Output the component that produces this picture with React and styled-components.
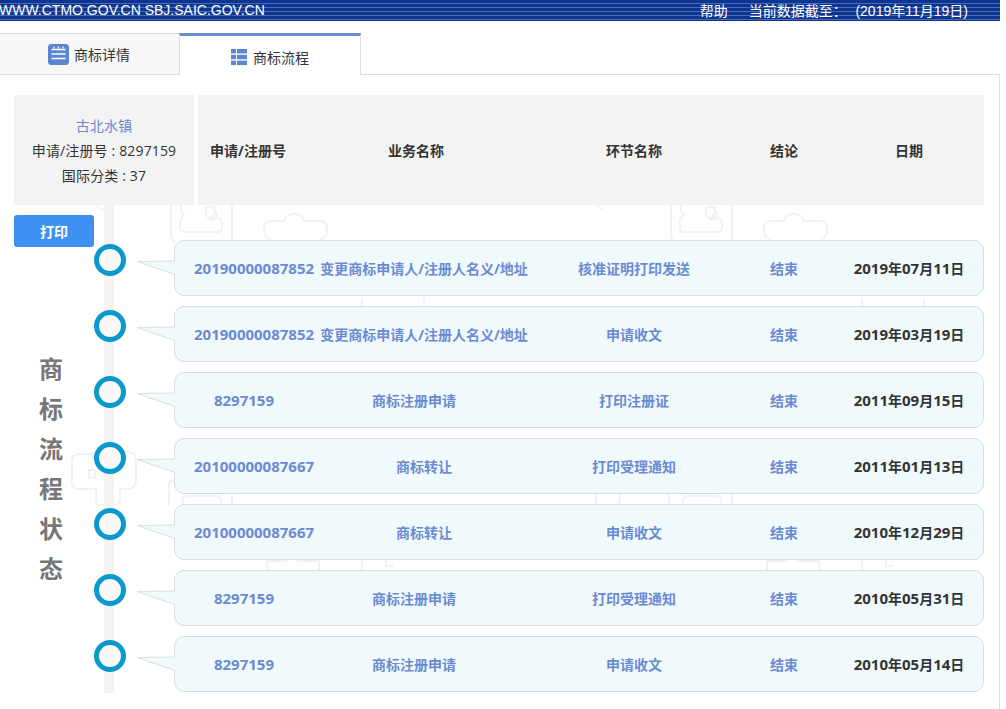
import React from "react";
import styled, { createGlobalStyle } from "styled-components";

const GlobalStyle = createGlobalStyle`
  html, body {
    margin: 0;
    padding: 0;
    background: #fff;
    overflow: hidden;
  }
  body {
    font-family: "Open Sans", "Noto Sans CJK SC", sans-serif;
    font-size: 14px;
    color: #333;
  }
`;

const BLUE = "#6a8bd3";

const Page = styled.div`
  position: relative;
  width: 1000px;
  height: 709px;
  overflow: hidden;
`;

const TopBar = styled.div`
  box-sizing: border-box;
  height: 21px;
  display: flex;
  align-items: center;
  justify-content: space-between;
  padding: 0 32px 1px 0;
  color: #fff;
  font-family: "Liberation Sans", "Noto Sans CJK SC", sans-serif;
  font-size: 14px;
  background: repeating-linear-gradient(
    to bottom,
    #0d3492 0,
    #0d3492 3px,
    #4a6cb0 3px,
    #4a6cb0 4px
  );
`;

const Sites = styled.span`
  margin-left: -1px;
`;

const TopRight = styled.div`
  display: flex;
  gap: 21px;
  word-spacing: 0.5px;
`;

const Tabs = styled.div`
  display: flex;
  margin-top: 12px;
  height: 41px;
  position: relative;
`;

const Tab = styled.div`
  display: flex;
  align-items: center;
  justify-content: center;
  gap: ${(p) => (p.$active ? "6px" : "5px")};
  box-sizing: border-box;
  width: ${(p) => (p.$active ? "182px" : "179px")};
  background: ${(p) => (p.$active ? "#fff" : "#f8f8f8")};
  border-top: ${(p) => (p.$active ? "3px solid #6a8fd0" : "1px solid #dedede")};
  border-left: ${(p) => (p.$active ? "1px solid #dedede" : "none")};
  border-right: ${(p) => (p.$active ? "1px solid #dedede" : "none")};
  padding-top: ${(p) => (p.$active ? "3px" : "0")};
  padding-right: ${(p) => (p.$active ? "0" : "1px")};
  height: ${(p) => (p.$active ? "42px" : "41px")};
  margin-bottom: -1px;
  z-index: 2;
`;

const Panel = styled.div`
  box-sizing: border-box;
  height: 635px;
  border-top: 1px solid #dedede;
  border-right: 1px solid #dedede;
  padding: 20px 15px 0 14px;
  position: relative;
  z-index: 1;
`;

const Watermark = styled.svg`
  position: absolute;
  left: 0;
  top: 0;
  z-index: 0;
  pointer-events: none;
`;

const TopRow = styled.div`
  display: flex;
  gap: 4px;
  position: relative;
  z-index: 2;
`;

const InfoBox = styled.div`
  width: 180px;
  height: 110px;
  background: #f3f3f3;
  display: flex;
  flex-direction: column;
  align-items: center;
  justify-content: center;
  line-height: 25px;
  letter-spacing: 0.15px;
`;

const Name = styled.div`
  color: ${BLUE};
`;

const TableHead = styled.div`
  flex: 1;
  height: 110px;
  background: #f3f3f3;
  display: grid;
  grid-template-columns: 100px 236px 200px 100px 150px;
  align-items: center;
  justify-items: center;
  font-weight: 700;
`;

const Body = styled.div`
  display: flex;
  position: relative;
  z-index: 1;
`;

const SideColumn = styled.div`
  width: 80px;
  flex: none;
`;

const PrintButton = styled.button`
  display: block;
  width: 80px;
  height: 32px;
  margin-top: 10px;
  border: none;
  border-radius: 3px;
  background: #3e90f2;
  color: #fff;
  font-family: inherit;
  font-size: 14px;
  font-weight: 700;
`;

const SideLabel = styled.div`
  margin-top: 102px;
  padding-right: 6px;
  display: flex;
  flex-direction: column;
  align-items: center;
  font-size: 24px;
  font-weight: 700;
  line-height: 40px;
  color: #777;
`;

const Timeline = styled.div`
  flex: 1;
  position: relative;
  padding-top: 35px;
  display: flex;
  flex-direction: column;
  gap: 10px;

  &::before {
    content: "";
    position: absolute;
    left: 10px;
    top: 0;
    width: 10px;
    height: 488px;
    background: #f3f3f3;
  }
`;

const Item = styled.div`
  display: flex;
  position: relative;
`;

const Dot = styled.div`
  box-sizing: border-box;
  width: 32px;
  height: 32px;
  margin-top: 4px;
  flex: none;
  border: 5px solid #0a99cc;
  border-radius: 50%;
  background: #f8f8f8;
  position: relative;
`;

const Card = styled.div`
  margin-left: 48px;
  box-sizing: border-box;
  width: 810px;
  height: 56px;
  padding: 0 19px;
  position: relative;
  display: grid;
  grid-template-columns: 100px 260px 160px 140px 110px;
  align-items: center;
  justify-items: center;
  border: 1px solid #d9dcde;
  border-radius: 10px;
  background: #f0f9fc;
  color: ${BLUE};
  font-weight: 700;
  white-space: nowrap;
`;

const Pointer = styled.svg`
  position: absolute;
  left: -38px;
  top: 19px;
`;

const Num = styled.span`
  font-size: 15px;
`;

const RegNo = styled.div`
  width: 100px;
  text-align: ${(p) => (p.$long ? "left" : "center")};
`;

const Business = styled.div`
  padding-right: ${(p) => (p.$shift ? "20px" : "0")};
`;

const DateCell = styled.div`
  color: #333;
`;

const head = ["申请/注册号", "业务名称", "环节名称", "结论", "日期"];

const rows = [
  { no: "20190000087852", biz: "变更商标申请人/注册人名义/地址", step: "核准证明打印发送", date: "2019年07月11日" },
  { no: "20190000087852", biz: "变更商标申请人/注册人名义/地址", step: "申请收文", date: "2019年03月19日" },
  { no: "8297159", biz: "商标注册申请", step: "打印注册证", date: "2011年09月15日" },
  { no: "20100000087667", biz: "商标转让", step: "打印受理通知", date: "2011年01月13日" },
  { no: "20100000087667", biz: "商标转让", step: "申请收文", date: "2010年12月29日" },
  { no: "8297159", biz: "商标注册申请", step: "打印受理通知", date: "2010年05月31日" },
  { no: "8297159", biz: "商标注册申请", step: "申请收文", date: "2010年05月14日" },
];

// digits are a touch wider than the 14px han text next to them
const withNums = (text) =>
  text.split(/(\d+)/).map((part, i) => (i % 2 ? <Num key={i}>{part}</Num> : part));

const DetailIcon = () => (
  <svg width="21" height="21" viewBox="0 0 21 21">
    <rect width="21" height="21" rx="3.5" fill="#5b86cf" />
    <path d="M6 2.5v2M10.5 2.5v2M15 2.5v2" stroke="#fff" strokeWidth="1.2" />
    <path d="M3.5 5.5h14M3.5 10h14M3.5 14.5h14" stroke="#fff" strokeWidth="1.6" />
  </svg>
);

const FlowIcon = () => (
  <svg width="16" height="16" viewBox="0 0 16 16" fill="#5b86cf">
    <rect x="0" y="0" width="5" height="4.4" />
    <rect x="6" y="0" width="10" height="4.4" />
    <rect x="0" y="5.8" width="5" height="4.4" />
    <rect x="6" y="5.8" width="10" height="4.4" />
    <rect x="0" y="11.6" width="5" height="4.4" />
    <rect x="6" y="11.6" width="10" height="4.4" />
  </svg>
);

// faint seal shapes that tile behind the list
const SealTile = ({ x }) => (
  <g transform={`translate(${x} 0)`}>
    <path d="M171 205v30q0 5 5 8M232 205v36" />
    <path d="M181 205v4q0 4 3 6q-4 2-4 8v4q0 5 5 5h32q5 0 5-5v-4q0-5-5-5h-6q4-3 4-7v-6" />
    <ellipse cx="211" cy="213" rx="5" ry="7" transform="rotate(-30 211 213)" />
    <path d="M270 243v-4q-6-2-6-8v-3q0-7 7-7h13q1-7 10-7t10 7h16q7 0 7 7v3q0 6-6 8v4" />
    <path d="M97 205q2 5 8 5" />
    <path d="M80 454h42q3-5 10-1v0q4 1 4 8v20q0 8-8 8h-8v10q0 6-6 6h-14q-4 0-4-6v-10h-18q-6 0-6-8v-20q0-7 8-7z" />
    <rect x="89" y="470" width="6" height="8" />
    <path d="M169 505v-20q0-5 5-5M232 480v25M183 505q-2-8 4-9h30q6 1 4 9" />
    <path d="M267 570v-9h18l6-4 8 4h20v9M362 570v-8q0-5 8-5h8q8 0 8 5v4h8" />
    <path d="M362 306v-8M424 298v8" />
  </g>
);

const Seals = () => (
  <Watermark width="1000" height="709" fill="none" stroke="#f2f2f2" strokeWidth="2">
    <SealTile x={0} />
    <SealTile x={500} />
  </Watermark>
);

const TailPointer = () => (
  <Pointer width="39" height="16" viewBox="0 0 39 16">
    <polygon points="0,1.5 39,1 39,15 38,15" fill="#f0f9fc" />
    <polyline points="38,1 0,1.5 38,14.5" fill="none" stroke="#dcdfe0" />
  </Pointer>
);

export default function App() {
  return (
    <Page>
      <GlobalStyle />
      <Seals />
      <TopBar>
        <Sites>WWW.CTMO.GOV.CN SBJ.SAIC.GOV.CN</Sites>
        <TopRight>
          <span>帮助</span>
          <span>当前数据截至：&nbsp; (2019年11月19日)</span>
        </TopRight>
      </TopBar>
      <Tabs>
        <Tab>
          <DetailIcon />
          商标详情
        </Tab>
        <Tab $active>
          <FlowIcon />
          商标流程
        </Tab>
      </Tabs>
      <Panel>
        <TopRow>
          <InfoBox>
            <Name>古北水镇</Name>
            <div>申请/注册号 : 8297159</div>
            <div>国际分类 : 37</div>
          </InfoBox>
          <TableHead>
            {head.map((h) => (
              <div key={h}>{h}</div>
            ))}
          </TableHead>
        </TopRow>
        <Body>
          <SideColumn>
            <PrintButton>打印</PrintButton>
            <SideLabel>
              {"商标流程状态".split("").map((c) => (
                <span key={c}>{c}</span>
              ))}
            </SideLabel>
          </SideColumn>
          <Timeline>
            {rows.map((r, i) => (
              <Item key={i}>
                <Dot />
                <Card>
                  <TailPointer />
                  <RegNo $long={r.no.length > 8}>
                    <Num>{r.no}</Num>
                  </RegNo>
                  <Business $shift={r.biz === "商标注册申请"}>{r.biz}</Business>
                  <div>{r.step}</div>
                  <div>结束</div>
                  <DateCell>{withNums(r.date)}</DateCell>
                </Card>
              </Item>
            ))}
          </Timeline>
        </Body>
      </Panel>
    </Page>
  );
}
